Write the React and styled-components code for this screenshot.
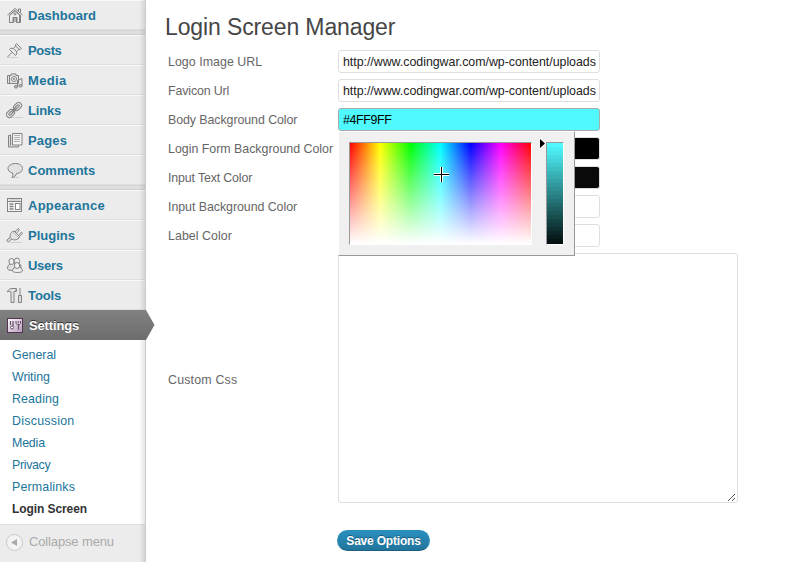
import React from "react";
import styled, { createGlobalStyle, css } from "styled-components";

const Global = createGlobalStyle`
  * { box-sizing: border-box; }
  body { margin: 0; background: #fff; overflow: hidden; }
  body, input, textarea, button { font-family: "Liberation Sans", Arial, sans-serif; }
`;

const Page = styled.div`
  display: flex;
  height: 562px;
  width: 785px;
  overflow: hidden;
`;

const Sidebar = styled.nav`
  position: relative;
  width: 146px;
  flex: none;
  background: #ececec;
  border-right: 1px solid #ccc;
  display: flex;
  flex-direction: column;
  &::after {
    content: "";
    position: absolute;
    inset: 0 0 0 auto;
    width: 6px;
    background: linear-gradient(to right, rgba(0, 0, 0, 0), rgba(0, 0, 0, 0.1));
    pointer-events: none;
  }
`;

const MenuItem = styled.a`
  display: flex;
  align-items: center;
  height: 30px;
  padding-left: 6px;
  gap: 5px;
  border-top: 1px solid #f9f9f9;
  border-bottom: 1px solid #dfdfdf;
  color: #21759b;
  font-size: 13px;
  font-weight: bold;
  line-height: 18px;
  letter-spacing: ${(p) => p.$spacing || 0}px;
  svg { flex: none; }
  span { padding-top: 2px; }
  ${(p) =>
    p.$active &&
    css`
      position: relative;
      z-index: 1;
      width: 145px;
      gap: 6px;
      color: #fff;
      text-shadow: 0 -1px 0 #333;
      border-color: #808080 transparent #6d6d6d;
      background: linear-gradient(#808080, #6d6d6d);
      &::after {
        content: "";
        position: absolute;
        left: 145px;
        top: -1px;
        width: 10px;
        height: 30px;
        background: inherit;
        clip-path: polygon(0 0, 1px 0, 9.5px 15px, 1px 30px, 0 30px);
      }
    `}
`;

const Separator = styled.div`
  height: 5px;
  flex: none;
  background: #dfdfdf;
  border-top: 1px solid #d4d4d4;
  border-bottom: 1px solid #cfcfcf;
`;

const Submenu = styled.div`
  height: 184px;
  background: #fff;
  padding: 4px 0 0 12px;
`;

const SubItem = styled.a`
  display: block;
  height: 22px;
  line-height: 22px;
  font-size: ${(p) => (p.$current ? 12 : 12.4)}px;
  color: ${(p) => (p.$current ? "#333" : "#21759b")};
  font-weight: ${(p) => (p.$current ? "bold" : "normal")};
  letter-spacing: ${(p) => p.$spacing || 0}px;
`;

const Collapse = styled.div`
  display: flex;
  align-items: center;
  gap: 6px;
  height: 38px;
  padding: 0 0 4px 5px;
  border-top: 1px solid #dfdfdf;
  color: #aaa;
  font-size: 13px;
  letter-spacing: -0.14px;
`;

const Main = styled.main`
  flex: 1;
  padding: 12px 0 0 19px;
`;

const Title = styled.h2`
  margin: 0;
  height: 38px;
  padding-top: 1px;
  font-size: 23px;
  font-weight: normal;
  line-height: 29px;
  letter-spacing: -0.12px;
  color: #464646;
  white-space: nowrap;
`;

const Form = styled.form`
  display: flex;
  flex-direction: column;
  gap: 6px;
  padding-left: 3px;
`;

const Row = styled.div`
  display: grid;
  grid-template-columns: 170px 400px;
  align-items: center;
`;

const Label = styled.label`
  font-size: 12.4px;
  line-height: 18px;
  color: #666;
  white-space: nowrap;
  padding-top: ${(p) => (p.$tall ? 3 : 1)}px;
  letter-spacing: ${(p) => p.$spacing || 0}px;
`;

const Field = styled.div`
  position: relative;
  display: flex;
`;

const TextInput = styled.input`
  width: 262px;
  height: 23px;
  padding: 1px 2px 0 4px;
  border: 1px solid ${(p) => (p.$focused ? "#aaa" : "#dfdfdf")};
  border-radius: 3px;
  background: ${(p) => p.$fill || "#fff"};
  color: ${(p) => (p.$focused ? "#000" : "#222")};
  font-size: 12.4px;
  letter-spacing: ${(p) => p.$spacing || 0}px;
  outline: none;
`;

const CssArea = styled.textarea`
  width: 400px;
  height: 250px;
  border: 1px solid #dfdfdf;
  border-radius: 3px;
  background: #fff;
  resize: none;
  outline: none;
`;

const Grip = styled.svg`
  position: absolute;
  right: 2px;
  bottom: 2px;
`;

const SaveButton = styled.button`
  width: 93px;
  height: 21px;
  margin: 21px 0 0 169px;
  padding: 1px 0 0;
  border: 1px solid #298cba;
  border-bottom-color: #1b607f;
  border-radius: 11px;
  background: linear-gradient(#2a8fbf, #21759b);
  color: #fff;
  font-size: 12px;
  font-weight: bold;
  letter-spacing: -0.2px;
  line-height: 14px;
  white-space: nowrap;
  text-shadow: 0 -1px 0 rgba(0, 0, 0, 0.35);
`;

const Picker = styled.div`
  position: absolute;
  z-index: 2;
  left: 0;
  top: 23px;
  width: 237px;
  height: 125px;
  display: flex;
  padding: 10px;
  border: 1px solid #fff;
  border-right-color: #999;
  border-bottom-color: #999;
  background: #f0f0f0;
`;

const ColorMap = styled.div`
  position: relative;
  width: 183px;
  height: 103px;
  border: 1px solid #999;
  border-right-color: #fff;
  border-bottom-color: #fff;
  background: linear-gradient(rgba(255, 255, 255, 0), #fff),
    linear-gradient(to right, #f00, #ff0 16.67%, #0f0 33.33%, #0ff 50%, #00f 66.67%, #f0f 83.33%, #f00);
`;

const Cross = styled.svg`
  position: absolute;
  left: 84px;
  top: 24px;
`;

const ValueBar = styled.div`
  position: relative;
  width: 18px;
  height: 103px;
  margin-left: 14px;
  border: 1px solid #999;
  border-right-color: #fff;
  border-bottom-color: #fff;
  background: ${(p) => p.$shades};
`;

const Pointer = styled.svg`
  position: absolute;
  left: -7px;
  top: -5px;
`;

const steps = 26;
const shades = `linear-gradient(${Array.from({ length: steps }, (_, i) => {
  const k = 1 - i / steps;
  const c = `rgb(${Math.round(79 * k)},${Math.round(249 * k)},${Math.round(255 * k)})`;
  return `${c} ${i * 4}px ${(i + 1) * 4}px`;
}).join(",")})`;

const drawings = {
  dashboard: (
    <>
      <path d="M3.5 8v7.500h4v-5h3v5h3V8L9 3.500z" fill="#eee" />
      <path d="M1.500 8L9 1.500 16.500 8M3 9l6-5.200L15 9M3.500 9v6.500H7v-5h4v5h3.500V9M12.500 4V2h2v3.700" />
      <path d="M9 5.500v3M7.500 7h3M9 11v4" />
    </>
  ),
  posts: (
    <>
      <path d="M1 15.500h11" stroke="#cfcfcf" />
      <path d="M10.500 1.500l5 5-1.200 1-1.300-.3-2.500 2.500.3 2.300-1.300 1.500-6-6L4.800 6.200l2.500.3L9.800 4 9.500 2.700z" fill="#e9e9e9" />
      <path d="M6.200 10.200L1.500 15M9.800 4L13 7.200M7.500 6.500l3 3" />
    </>
  ),
  media: (
    <>
      <path d="M1.500 3.500H5V2h5v1.500h2.500v8h-11z" fill="#e2e2e2" />
      <circle cx="8" cy="7" r="2.500" fill="#fff" />
      <circle cx="8" cy="7" r=".8" />
      <path d="M3.500 4v7M11.500 14.500V8.500l4.500-2v7" />
      <ellipse cx="10" cy="14.800" rx="1.700" ry="1.300" fill="#bbb" />
      <ellipse cx="14.500" cy="13.800" rx="1.700" ry="1.300" fill="#bbb" />
    </>
  ),
  links: (
    <>
      <path d="M4 15.500h13" stroke="#cfcfcf" />
      <g transform="rotate(-45 8 8)" fill="none">
        <rect x="-1.500" y="5" width="9" height="6" rx="3" fill="#e4e4e4" />
        <rect x="1" y="7" width="4.500" height="2" rx="1" />
        <rect x="8.500" y="5" width="9" height="6" rx="3" fill="#e4e4e4" />
        <rect x="10.500" y="7" width="4.500" height="2" rx="1" />
        <path d="M4.500 7.200h7M4.500 8.800h7" />
      </g>
    </>
  ),
  pages: (
    <>
      <path d="M4.500 3.500h-2v11.500h10V13.500" fill="#ddd" />
      <path d="M4.500 2.500v11" />
      <path d="M6.500 1.500h9.500v11.500H6.500z" fill="#f4f4f4" />
      <path d="M8 3.500h6M8 5.500h6M8 7.500h6M8 9.500h6" stroke="#b0b0b0" />
    </>
  ),
  comments: (
    <>
      <path d="M5 15.500h8" stroke="#cfcfcf" />
      <path d="M9.500 1.500c4.200 0 7 2.200 7 4.900s-2.500 4.900-6 5.100c-.7 2.200-2 3.600-4.500 4 1-1.300 1-3 .5-4.500C3.500 10.300 2 8.500 2 6.400c0-2.700 3.300-4.900 7.500-4.900z" fill="#e2e2e2" />
    </>
  ),
  appearance: (
    <>
      <rect x="1.500" y="1.500" width="14" height="13" fill="#f4f4f4" />
      <path d="M2 4.500h13" />
      <path d="M3 3h11" stroke="#bbb" />
      <path d="M3.500 7h4M3.500 9.500h4M3.500 12h4" strokeWidth="1.300" />
      <rect x="9.500" y="6.500" width="4.500" height="6" fill="#fff" />
    </>
  ),
  plugins: (
    <>
      <path d="M4 15.500h12" stroke="#cfcfcf" />
      <path d="M6.500 4.500L13 11c-2.800 2.600-6 2.200-7.800.6S3.800 7 6.500 4.500z" fill="#e4e4e4" />
      <path d="M4.500 10.500C2 11.500 0 13.500 1.500 14.500s2.500-.5 4-2.500" fill="#ddd" />
      <path d="M6.500 4.500L8 4l5.500 5.500-.5 1.500M9 5l3-3.500 1.300 1L10.500 6.500M12.500 8.500l2.800-3.300 1.200 1L13.500 9.500" fill="#eee" />
    </>
  ),
  users: (
    <>
      <path d="M1.500 11.500c0-2.500 1.500-4.500 3.500-5L11 5.500c3 0 4 3 4 5 0 1.500-5 3-7 2.500-2 .7-6.500.5-6.500-1.500z" fill="#e0e0e0" />
      <rect x="3" y="1.500" width="5" height="6" rx="2.500" fill="#eee" />
      <rect x="8.500" y="1" width="5" height="6" rx="2.500" fill="#eee" />
      <path d="M6.500 14c0-2.500 2-4 5-4s5 1.500 5 4c-1 2-9 2-10 0z" fill="#eee" />
      <rect x="8.500" y="5.500" width="5" height="6" rx="2.500" fill="#f2f2f2" />
    </>
  ),
  tools: (
    <>
      <path d="M1.500 5C2 2.500 4 1.500 6 1.500h4v3H8v11H5V5C3.500 4 2.500 4 1.500 5z" fill="#e4e4e4" />
      <path d="M10.500 1.500v3M14 1v7.500M12.500 8.500h3v7h-3z" fill="#ddd" />
      <path d="M10 14.500v1" stroke="#bbb" />
    </>
  ),
};

const Icon = ({ name }) => (
  <svg width="17" height="17" viewBox="0 0 17 17" fill="none" stroke="#828282" strokeWidth="1">
    {drawings[name]}
  </svg>
);

const SettingsIcon = () => (
  <svg width="17" height="17" viewBox="0 0 17 17">
    <defs>
      <linearGradient id="plum" x2="1" y2="1">
        <stop stopColor="#fff" />
        <stop offset="1" stopColor="#b598b8" />
      </linearGradient>
    </defs>
    <rect x="1.500" y="1.500" width="15" height="14" fill="url(#plum)" stroke="#543654" />
    <path d="M4.500 4v4M7 4v5M12.500 8v4.500" fill="none" stroke="#6a4c6a" strokeWidth="1.200" />
    <circle cx="6" cy="10.500" r="1.500" fill="#fff" stroke="#6a4c6a" />
    <path d="M10 4v2.500l1.500 1h2L14.500 6.500V4M12.300 4v2" fill="none" stroke="#6a4c6a" />
  </svg>
);

const menu = [
  ["dashboard", "Dashboard", 0],
  null,
  ["posts", "Posts", -0.4],
  ["media", "Media", 0.35],
  ["links", "Links", -0.15],
  ["pages", "Pages", 0.15],
  ["comments", "Comments", 0],
  null,
  ["appearance", "Appearance", 0.26],
  ["plugins", "Plugins", 0],
  ["users", "Users", -0.3],
  ["tools", "Tools", -0.1],
];

const submenu = [
  ["General", 0],
  ["Writing", -0.08],
  ["Reading", 0.13],
  ["Discussion", 0.26],
  ["Media", -0.17],
  ["Privacy", -0.33],
  ["Permalinks", 0.18],
];

const UPLOADS = "http://www.codingwar.com/wp-content/uploads";

const fields = [
  { label: "Logo Image URL", spacing: 0.04, value: UPLOADS, valueSpacing: -0.03 },
  { label: "Favicon Url", spacing: -0.13, value: UPLOADS, valueSpacing: -0.03 },
  { label: "Body Background Color", spacing: -0.07, value: "#4FF9FF", fill: "#4ff9ff", valueSpacing: -0.35, open: true },
  { label: "Login Form Background Color", spacing: -0.01, fill: "#000" },
  { label: "Input Text Color", spacing: -0.15, fill: "#0a0a0a" },
  { label: "Input Background Color", spacing: -0.05 },
  { label: "Label Color", spacing: 0.05 },
];

const ColorPicker = () => (
  <Picker>
    <ColorMap>
      <Cross width="15" height="15" viewBox="0 0 15 15" shapeRendering="crispEdges">
        <path d="M0 6h15v3H0zM6 0h3v15H6z" fill="#fff" />
        <path d="M0 7h15v1H0zM7 0h1v15H7z" fill="#000" />
      </Cross>
    </ColorMap>
    <ValueBar $shades={shades}>
      <Pointer width="6" height="11" viewBox="0 0 6 11">
        <path d="M0 0h1l5 5.500L1 11H0z" fill="#fff" />
        <path d="M0 1l5 4.500L0 10z" fill="#000" />
      </Pointer>
    </ValueBar>
  </Picker>
);

export default function App() {
  return (
    <Page>
      <Global />
      <Sidebar>
        {menu.map((m, i) =>
          m ? (
            <MenuItem key={m[1]} $spacing={m[2]}>
              <Icon name={m[0]} />
              <span>{m[1]}</span>
            </MenuItem>
          ) : (
            <Separator key={i} />
          )
        )}
        <MenuItem $active $spacing={-0.15}>
          <SettingsIcon />
          <span>Settings</span>
        </MenuItem>
        <Submenu>
          {submenu.map(([name, spacing]) => (
            <SubItem key={name} $spacing={spacing}>{name}</SubItem>
          ))}
          <SubItem $current $spacing={-0.08}>Login Screen</SubItem>
        </Submenu>
        <Collapse>
          <svg width="18" height="18" viewBox="0 0 18 18">
            <circle cx="9.500" cy="9.500" r="8" fill="#f3f3f3" stroke="#c8c8c8" />
            <path d="M6 9.500l6-3.500v7z" fill="#aaa" />
          </svg>
          Collapse menu
        </Collapse>
      </Sidebar>
      <Main>
        <Title>Login Screen Manager</Title>
        <Form>
          {fields.map((f) => (
            <Row key={f.label}>
              <Label $spacing={f.spacing}>{f.label}</Label>
              <Field>
                <TextInput
                  readOnly
                  value={f.value || ""}
                  $fill={f.fill}
                  $focused={f.open}
                  $spacing={f.valueSpacing}
                />
                {f.open && <ColorPicker />}
              </Field>
            </Row>
          ))}
          <Row>
            <Label $tall $spacing={0.18}>Custom Css</Label>
            <Field>
              <CssArea readOnly />
              <Grip width="8" height="8" viewBox="0 0 8 8" shapeRendering="crispEdges">
                <path
                  d="M0 7h1v1H0zM1 6h1v1H1zM2 5h1v1H2zM3 4h1v1H3zM4 3h1v1H4zM5 2h1v1H5zM6 1h1v1H6zM4 7h1v1H4zM5 6h1v1H5zM6 5h1v1H6z"
                  fill="#555"
                />
              </Grip>
            </Field>
          </Row>
          <SaveButton type="button">Save Options</SaveButton>
        </Form>
      </Main>
    </Page>
  );
}
